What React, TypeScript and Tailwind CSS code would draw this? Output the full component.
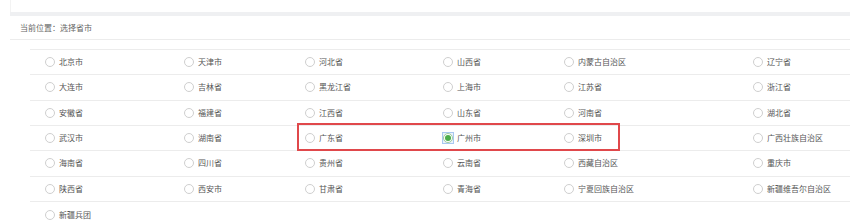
import React from "react";

const rows: string[][] = [
  ["北京市", "天津市", "河北省", "山西省", "内蒙古自治区", "辽宁省"],
  ["大连市", "吉林省", "黑龙江省", "上海市", "江苏省", "浙江省"],
  ["安徽省", "福建省", "江西省", "山东省", "河南省", "湖北省"],
  ["武汉市", "湖南省", "广东省", "广州市", "深圳市", "广西壮族自治区"],
  ["海南省", "四川省", "贵州省", "云南省", "西藏自治区", "重庆市"],
  ["陕西省", "西安市", "甘肃省", "青海省", "宁夏回族自治区", "新疆维吾尔自治区"],
  ["新疆兵团"],
];

function Radio({ checked }: { checked?: boolean }) {
  if (checked) {
    return (
      <span className="flex h-[12px] w-[12px] items-center justify-center border border-[#a9c8f0] bg-[#eaf2fc]">
        <span className="flex h-[10px] w-[10px] items-center justify-center rounded-full border border-[#9ccc9c] bg-white">
          <span className="h-[6px] w-[6px] rounded-full bg-[#4cae4c]" />
        </span>
      </span>
    );
  }
  return <span className="h-[10px] w-[10px] rounded-full border border-[#cfcfcf] bg-white" />;
}

export default function App() {
  return (
    <div
      className="h-[221px] w-[864px] overflow-hidden bg-white text-[8px] text-[#555]"
      style={{ fontFamily: '"Noto Sans CJK SC", "Noto Sans", sans-serif' }}
    >
      <div className="ml-[10px] w-[840px]">
        <div className="h-[12px] border-l border-[#f3f3f3] bg-white" />
        <div className="h-[4px] bg-[#eff0f2]" />
        <div className="bg-white">
          <div className="flex h-[24px] items-center border-b border-[#ececec] pl-[10px] text-[#666]">
            当前位置：选择省市
          </div>
          <div className="relative ml-[20px] mt-[9px] border-t border-[#ececec]">
            {rows.map((r, i) => (
              <div
                key={i}
                className={`relative grid h-[25.33px] grid-cols-[139px_121px_138px_121px_189px_1fr] items-center ${
                  i < rows.length - 1 ? "border-b border-[#ececec]" : ""
                }`}
              >
                {r.map((name) => (
                  <div key={name} className="flex items-center gap-[4px] pl-[15px]">
                    <span className="flex w-[10px] items-center justify-center">
                      <Radio checked={name === "广州市"} />
                    </span>
                    <span className="leading-none">{name}</span>
                  </div>
                ))}
                {i === 3 && (
                  <div className="pointer-events-none absolute left-[267px] top-[-3px] h-[28px] w-[323px] border-2 border-[#e0484b]" />
                )}
              </div>
            ))}
          </div>
        </div>
      </div>
    </div>
  );
}
